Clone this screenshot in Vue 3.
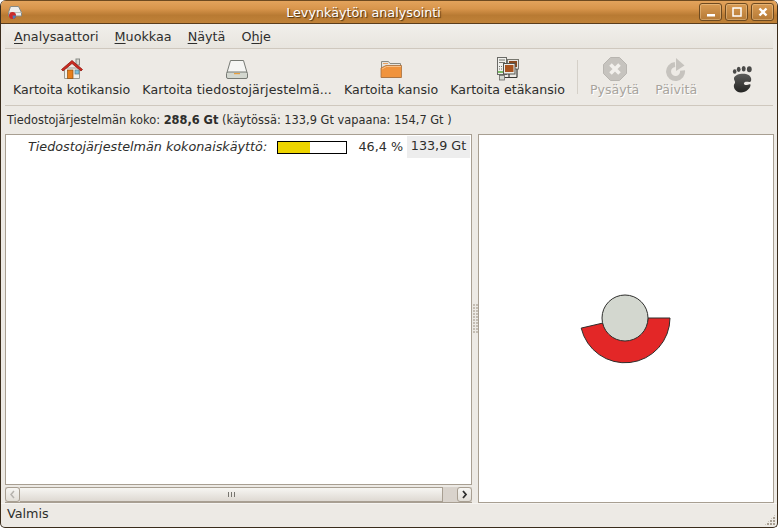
<template>
  <div class="window">
    <header class="titlebar">
      <svg class="app-icon" width="16" height="16" viewBox="0 0 16 16">
        <path d="M3.5 2.5h8l3 6v3.500h-13V8.500z" fill="#eeeeec" stroke="#888a85" />
        <path d="M2 8.500h12.500" stroke="#babdb6" />
        <circle cx="5.500" cy="11.500" r="3.500" fill="#cc2a2a" />
        <path d="M5.500 11.500h3.500a3.500 3.500 0 0 1-3 3.400z" fill="#4e7fb5" />
      </svg>
      <span class="title">Levynkäytön analysointi</span>
      <div class="wm-buttons">
        <button class="wm-btn"><svg width="10" height="10" viewBox="0 0 10 10"><rect x="1" y="7" width="8" height="2.500" fill="#fff" /></svg></button>
        <button class="wm-btn"><svg width="10" height="10" viewBox="0 0 10 10"><rect x="1" y="1" width="8" height="8" fill="none" stroke="#fff" stroke-width="1.500" /></svg></button>
        <button class="wm-btn"><svg width="10" height="10" viewBox="0 0 10 10"><path d="M1.500 1.500l7 7M8.500 1.500l-7 7" stroke="#fff" stroke-width="2.400" /></svg></button>
      </div>
    </header>

    <nav class="menubar">
      <span class="menu"><u>A</u>nalysaattori</span>
      <span class="menu"><u>M</u>uokkaa</span>
      <span class="menu"><u>N</u>äytä</span>
      <span class="menu">O<u>h</u>je</span>
    </nav>

    <div class="toolbar">
      <div class="tool tool-home">
        <svg width="24" height="24" viewBox="0 0 24 24">
          <rect x="16" y="2" width="3.500" height="6" fill="#d3d7cf" stroke="#888a85" />
          <path d="M4.500 11h15v10.500h-15z" fill="#f2f0ea" stroke="#9a9a92" />
          <path d="M1.500 12.500L12 3.500l10.500 9-1.500 1.500L12 6.500 3 14z" fill="#cc2a20" stroke="#8f1a12" stroke-width=".8" />
          <rect x="7.500" y="13" width="5.500" height="8.500" fill="#e8801c" stroke="#8f4f0c" stroke-width=".7" />
          <rect x="15" y="13" width="4" height="4" fill="#7fc0dc" stroke="#60808c" stroke-width=".7" />
        </svg>
        <span>Kartoita kotikansio</span>
      </div>
      <div class="tool tool-fs">
        <svg width="24" height="24" viewBox="0 0 24 24">
          <path d="M5.500 3.500h13l3.500 12H2z" fill="#f6f6f4" stroke="#777a74" />
          <rect x="1.500" y="15" width="21" height="6.500" rx="1.500" fill="#d3d7cf" stroke="#777a74" />
          <rect x="9" y="16" width="6" height="1.200" fill="#e8a040" />
        </svg>
        <span>Kartoita tiedostojärjestelmä...</span>
      </div>
      <div class="tool tool-folder">
        <svg width="24" height="24" viewBox="0 0 24 24">
          <path d="M2.500 4.500h7l1.500 2h10.500v14h-19z" fill="#e6e4de" stroke="#8a8a82" />
          <rect x="4" y="6" width="5" height="1" fill="#e8a060" />
          <path d="M2 11l5-2.500h15.500v12H2z" fill="#f0933c" stroke="#a8703c" stroke-width=".8" />
          <path d="M3 12l4.500-2.500H22" fill="none" stroke="#f8c088" />
        </svg>
        <span>Kartoita kansio</span>
      </div>
      <div class="tool tool-remote">
        <svg width="24" height="24" viewBox="0 0 24 24">
          <rect x="1.500" y=".5" width="9" height="17" fill="#f0f0ec" stroke="#6a6a66" />
          <path d="M3 3h6M3 5.500h6" stroke="#77776f" />
          <rect x="11.500" y="2.500" width="11" height="9.500" fill="#e6e6e2" stroke="#77776f" />
          <rect x="13" y="4" width="8" height="6" fill="#8a4a20" />
          <rect x="7.500" y="6.500" width="11.500" height="10.500" fill="#ecece8" stroke="#55554f" />
          <rect x="9" y="8" width="8.500" height="7" fill="#a9541f" />
          <path d="M3 9.500h.8M5 9.500h.8M3 12h.8M5 12h.8" stroke="#55554f" />
          <path d="M2 15h5" stroke="#55a83a" stroke-width="1.500" />
          <path d="M13 17v3M6 20.500h15M21 12v8.500" stroke="#3a3a36" stroke-width="1.200" />
          <rect x="3.500" y="18.500" width="5" height="4.500" fill="#d3d7cf" stroke="#6a6a66" stroke-width=".8" />
        </svg>
        <span>Kartoita etäkansio</span>
      </div>
      <div class="tool-sep"></div>
      <div class="tool tool-stop disabled">
        <svg width="24" height="24" viewBox="0 0 24 24">
          <path d="M7.500 .5h9l7 7v9l-7 7h-9l-7-7v-9z" fill="#c6c3be" stroke="#b8b5b0" />
          <path d="M7.500 7.500l9 9M16.500 7.500l-9 9" stroke="#f2f0ec" stroke-width="3.600" />
        </svg>
        <span>Pysäytä</span>
      </div>
      <div class="tool tool-refresh disabled">
        <svg width="24" height="24" viewBox="0 0 24 24">
          <path d="M18.500 13.500A7 7 0 1 1 11 7.500" fill="none" stroke="#c6c3be" stroke-width="5" />
          <path d="M12 1l8.500 7.500L12 14z" fill="#c6c3be" />
        </svg>
        <span>Päivitä</span>
      </div>
      <div class="tool-throbber">
        <svg width="20" height="27" viewBox="0 0 20 27">
          <ellipse cx="2.700" cy="5.500" rx="1.800" ry="2.200" fill="#4a4a48" />
          <ellipse cx="6.700" cy="3.300" rx="1.900" ry="2.600" fill="#4a4a48" />
          <ellipse cx="11.700" cy="2.700" rx="2" ry="2.700" fill="#4a4a48" />
          <ellipse cx="17.300" cy="3.300" rx="2.400" ry="3" fill="#4a4a48" />
          <path d="M2 12C3 8 10 7 14 8c4 1 6 4 5 7-1 2-4 0-6 1-2 1-1 3 1 3 2 0 3-1.500 4.500-.5C19 22 14 26.500 9 26.500 3 26.500 0 20 3 17c.5-2-1.500-3-1-5z" fill="url(#foot)" />
          <defs>
            <linearGradient id="foot" x1="0" y1="0" x2="0" y2="1">
              <stop offset="0" stop-color="#5c5c5a" />
              <stop offset="1" stop-color="#242422" />
            </linearGradient>
          </defs>
        </svg>
      </div>
    </div>

    <div class="info">Tiedostojärjestelmän koko: <b>288,6 Gt</b> (käytössä: 133,9 Gt vapaana: 154,7 Gt )</div>

    <main class="panes">
      <section class="left-pane">
        <div class="tree">
          <div class="row">
            <span class="row-name">Tiedostojärjestelmän kokonaiskäyttö:</span>
            <span class="usage"><span class="usage-fill" :style="{ width: percent + '%' }"></span></span>
            <span class="row-percent">46,4 %</span>
            <span class="row-size">133,9 Gt</span>
          </div>
        </div>
        <div class="hscroll">
          <button class="arrow arrow-left"><svg width="7" height="9" viewBox="0 0 7 9"><path d="M5 1L2 4.500 5 8" fill="none" stroke="#b5b2ad" stroke-width="1.500" /></svg></button>
          <div class="thumb"><span class="grip"></span></div>
          <div class="trough"></div>
          <button class="arrow arrow-right"><svg width="7" height="9" viewBox="0 0 7 9"><path d="M2 1l3 3.500L2 8" fill="none" stroke="#2e2e2c" stroke-width="1.800" /></svg></button>
        </div>
      </section>
      <div class="splitter"><span class="dots"></span></div>
      <section class="right-pane">
        <svg class="ring" width="296" height="369" viewBox="478 134 296 369">
          <path d="M670 318A45 45 0 0 1 581.200 328.100L603 323A23 23 0 0 0 648 318z" fill="#e32727" stroke="#2e2e2c" stroke-width="1" />
          <circle cx="625" cy="318" r="23" fill="#d3d7cf" stroke="#2e2e2c" stroke-width="1" />
        </svg>
      </section>
    </main>

    <footer class="statusbar">
      <span>Valmis</span>
      <span class="resize-grip"></span>
    </footer>
  </div>
</template>

<script setup>
const percent = 46.4
</script>

<style>
html, body {
  margin: 0;
  background: #fff;
}
</style>

<style scoped>
.window {
  box-sizing: border-box;
  width: 778px;
  height: 528px;
  display: flex;
  flex-direction: column;
  background: #edeae5;
  border: 1px solid #3a2c1c;
  border-top: none;
  border-radius: 6px 6px 5px 5px;
  overflow: hidden;
  font-family: "DejaVu Sans", sans-serif;
  font-size: 12.75px;
  color: #2e2e2c;
}

.titlebar {
  flex: none;
  height: 24px;
  display: flex;
  align-items: center;
  padding: 0 3px 0 6px;
  background: linear-gradient(#e3a35c 0, #d8954b 35%, #b87a33 65%, #c08238 100%);
  border-top: 1px solid #6e4a20;
  border-bottom: 1px solid #5a3d1c;
  box-sizing: border-box;
}

.app-icon {
  flex: none;
}

.title {
  flex: 1;
  padding-left: 5px;
  text-align: center;
  color: #fff;
  font-size: 12.75px;
  text-shadow: 1px 1px 1px #4a3010;
}

.wm-buttons {
  display: flex;
  gap: 3px;
}

.wm-btn {
  box-sizing: border-box;
  width: 23px;
  height: 18px;
  padding: 0;
  display: flex;
  align-items: center;
  justify-content: center;
  background: linear-gradient(#d89a52, #b57a36);
  border: 1px solid #6e4a20;
  border-radius: 3px;
  box-shadow: inset 0 0 0 1px rgba(255, 225, 180, 0.35);
}

.menubar {
  flex: none;
  height: 24px;
  display: flex;
  align-items: center;
  gap: 16px;
  margin: 0 4px;
  padding-left: 9px;
  background: linear-gradient(#f1efeb, #e8e5df);
  border-bottom: 1px solid #cfc8be;
}

.menu u {
  text-underline-offset: 2px;
}

.toolbar {
  flex: none;
  height: 57px;
  display: flex;
  align-items: flex-start;
  margin: 0 4px;
  border-bottom: 1px solid #cfc8be;
  box-sizing: border-box;
  font-size: 12.6px;
}

.tool {
  display: flex;
  flex-direction: column;
  align-items: center;
  padding-top: 8px;
  white-space: nowrap;
  margin-left: 12px;
}

.tool svg {
  display: block;
  margin-bottom: 1px;
}

.tool span {
  line-height: 16px;
}

.tool-home {
  margin-left: 8px;
}

.tool-fs span {
  letter-spacing: 0.08px;
}

.tool-sep {
  align-self: center;
  width: 1px;
  height: 34px;
  background: #d5d0c8;
  margin: 0 12px;
}

.tool-stop {
  margin-left: 0;
}

.tool-refresh {
  margin-left: 16px;
}

.disabled span {
  color: #a8a49d;
  text-shadow: 1px 1px 0 #fff;
}

.tool-throbber {
  margin-left: 35px;
  padding-top: 17px;
}

.tool-throbber svg {
  display: block;
}

.info {
  flex: none;
  height: 28px;
  padding: 0 6px;
  line-height: 28px;
  font-size: 11.4px;
  white-space: nowrap;
  box-sizing: border-box;
}

.panes {
  flex: 1;
  min-height: 0;
  display: flex;
  padding: 0 3px 0 4px;
}

.left-pane {
  width: 467px;
  display: flex;
  flex-direction: column;
}

.tree {
  flex: 1;
  background: #fff;
  border: 1px solid #a89f92;
  padding-top: 1px;
}

.row {
  height: 22px;
  display: flex;
  align-items: center;
}

.row-name {
  width: 271px;
  padding-left: 22px;
  margin-bottom: 2px;
  box-sizing: border-box;
  font-style: italic;
  white-space: nowrap;
}

.usage {
  box-sizing: border-box;
  width: 70px;
  height: 13px;
  border: 1px solid #000;
  background: #fff;
}

.usage-fill {
  display: block;
  height: 100%;
  background: #edd400;
}

.row-percent {
  box-sizing: border-box;
  width: 60px;
  padding-right: 4px;
  margin-bottom: 2px;
  text-align: right;
  white-space: nowrap;
}

.row-size {
  width: 63px;
  height: 22px;
  line-height: 20px;
  text-align: center;
  background: #ededed;
  white-space: nowrap;
}

.hscroll {
  flex: none;
  height: 15px;
  margin-top: 2px;
  display: flex;
  background: #d9d3cc;
  border-bottom: 1px solid #a89f92;
}

.arrow {
  box-sizing: border-box;
  flex: none;
  width: 15px;
  height: 15px;
  padding: 0;
  display: flex;
  align-items: center;
  justify-content: center;
  background: linear-gradient(#f7f6f3, #e2ded7);
  border: 1px solid #a89f92;
  border-radius: 3px;
}

.thumb {
  box-sizing: border-box;
  width: 423px;
  display: flex;
  align-items: center;
  justify-content: center;
  background: linear-gradient(#f7f6f3, #ded9d2);
  border: 1px solid #a89f92;
  border-left: none;
}

.grip {
  width: 7px;
  height: 5px;
  background: repeating-linear-gradient(90deg, #77756f 0 1px, transparent 1px 3px);
}

.trough {
  flex: 1;
}

.splitter {
  width: 6px;
  display: flex;
  align-items: center;
  justify-content: center;
}

.dots {
  width: 5px;
  height: 30px;
  background-image: radial-gradient(circle at 1px 1px, #c4bdb3 1px, transparent 1px);
  background-size: 3px 3px;
}

.right-pane {
  flex: none;
  width: 296px;
  background: #fff;
  box-shadow: 0 0 0 1px #a89f92 inset;
  overflow: hidden;
}

.ring {
  display: block;
}

.statusbar {
  position: relative;
  flex: none;
  height: 24px;
  padding: 0 6px 5px;
  display: flex;
  align-items: center;
  border-top: 1px solid #f6f4f1;
  box-sizing: border-box;
}

.resize-grip {
  position: absolute;
  right: 1px;
  bottom: 1px;
  width: 12px;
  height: 12px;
  background-image: radial-gradient(circle at 1px 1px, #a89f92 1px, transparent 1px);
  background-size: 3px 3px;
  clip-path: polygon(100% 0, 100% 100%, 0 100%);
}
</style>
